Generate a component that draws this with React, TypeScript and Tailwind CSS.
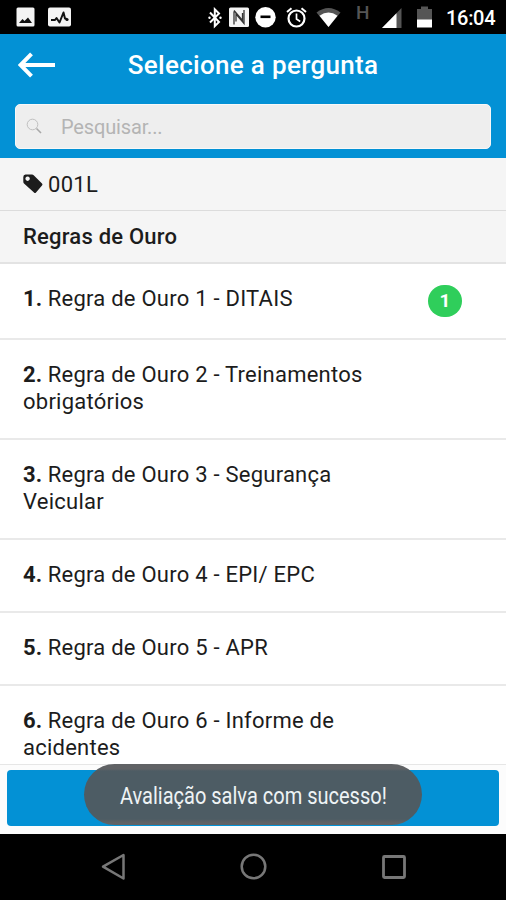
import type { ReactNode } from "react";

const questions = [
  { id: 1, text: "Regra de Ouro 1 - DITAIS", height: "h-[76px]", answered: 1 },
  { id: 2, text: "Regra de Ouro 2 - Treinamentos obrigatórios", height: "h-[100px]" },
  { id: 3, text: "Regra de Ouro 3 - Segurança Veicular", height: "h-[100px]" },
  { id: 4, text: "Regra de Ouro 4 - EPI/ EPC", height: "h-[73px]" },
  { id: 5, text: "Regra de Ouro 5 - APR", height: "h-[73px]" },
  { id: 6, text: "Regra de Ouro 6 - Informe de acidentes", height: "h-[100px]" },
];

function Icon({ w, h, className = "", children }: { w: number; h: number; className?: string; children: ReactNode }) {
  return (
    <svg width={w} height={h} viewBox={`0 0 ${w} ${h}`} fill="none" className={`shrink-0 ${className}`}>
      {children}
    </svg>
  );
}

function StatusBar() {
  return (
    <div className="flex h-[34px] shrink-0 items-start bg-black text-white">
      <Icon w={19} h={20} className="mt-[7px] ml-4">
        <rect x="0.5" y="0.5" width="18" height="19" rx="1.5" fill="#f4f4f4" />
        <path d="M3 16l3.500-4 2 2L12 10.500l4 5.500z" fill="#111" />
      </Icon>
      <Icon w={23} h={20} className="mt-[7px] ml-[13px]">
        <rect x="0" y="0.5" width="23" height="19" rx="2" fill="#f4f4f4" />
        <path d="M3 13h4l1.500-2 3 4.500L15.500 5.500l1.500 6 2 0.500" stroke="#111" strokeWidth="2" strokeLinejoin="round" />
        <circle cx="19" cy="12.500" r="1.600" fill="#111" />
      </Icon>
      <Icon w={14} h={22} className="mt-[7px] ml-[137px]">
        <path d="M2 5.500l9 9.500-4.200 4.200V2.300L11 6.500 2 15.500" stroke="#fff" strokeWidth="2" />
        <circle cx="1.500" cy="10.700" r="1.200" fill="#fff" />
        <circle cx="12.500" cy="10.700" r="1.200" fill="#fff" />
      </Icon>
      <Icon w={20} h={20} className="mt-[7px] ml-[7px]">
        <rect y="0.500" width="20" height="19.500" rx="1.500" fill="#f4f4f4" />
        <path d="M5 17.500V4.500M5 3.500l8.500 10V6M15 3v13.500l-8-9.500v7.500" stroke="#333" strokeWidth="1.300" />
      </Icon>
      <Icon w={21} h={21} className="mt-[7px] ml-[6px]">
        <circle cx="10.500" cy="10.300" r="10.200" fill="#fff" />
        <path d="M5.500 9.800h10" stroke="#000" strokeWidth="2.600" />
      </Icon>
      <Icon w={21} h={21} className="mt-[7px] ml-[10px]">
        <circle cx="10.500" cy="11.500" r="8" stroke="#fff" strokeWidth="2.200" />
        <path d="M1 5L5.500 1.200M20 5l-4.500-3.800" stroke="#fff" strokeWidth="2" />
        <path d="M10.500 6.500v5.500l3.700 2.500" stroke="#fff" strokeWidth="1.700" />
      </Icon>
      <Icon w={26} h={21} className="mt-[7px] ml-[9px]">
        <path d="M0.500 5.500Q12.500-3.500 24.500 5.500L12.500 20z" fill="#555" />
        <path d="M3.500 8.800Q12.500 2 21.500 8.800L12.500 20z" fill="#fff" />
      </Icon>
      <span className="mt-[3px] ml-[14px] w-[14px] text-[19px] leading-[20px] font-medium text-[#555]">H</span>
      <Icon w={20} h={20} className="mt-[8px] ml-[12px]">
        <path d="M19.500 0v20H0z" fill="#555" />
        <path d="M14.500 5.200V20H0z" fill="#fff" />
      </Icon>
      <Icon w={15} h={22} className="mt-[6px] ml-[15px]">
        <path d="M4 0.500h7V3h4v11H0V3h4z" fill="#555" />
        <path d="M0 13.500h15v8H0z" fill="#fff" />
      </Icon>
      <span className="mt-[6px] ml-[14px] text-[20px] leading-[24px] font-medium tracking-[-0.3px] whitespace-nowrap">
        16:04
      </span>
    </div>
  );
}

function Header() {
  return (
    <header className="h-[124px] shrink-0 bg-[#0391d5]">
      <div className="grid h-[62px] grid-cols-[60px_1fr_60px] items-center">
        <Icon w={38} h={26} className="ml-[18px]">
          <path d="M37 13H3M13.500 1.800L2.500 13l11 11.200" stroke="#fff" strokeWidth="4" />
        </Icon>
        <h1 className="text-center text-[26px] leading-8 font-medium tracking-[0.32px] whitespace-nowrap text-white">
          Selecione a pergunta
        </h1>
      </div>
      <div className="mx-[15px] mt-2 flex h-[45px] items-center rounded-[5px] border border-[#f8f8f8] bg-[#eeeeee]">
        <Icon w={16} h={16} className="mb-[2px] ml-[10px]">
          <circle cx="6.500" cy="6.500" r="5.300" stroke="#c0c0c0" strokeWidth="1" />
          <path d="M10.500 10.500l4.500 4.500" stroke="#a8a8a8" strokeWidth="1.600" />
        </Icon>
        <span className="ml-[19px] text-[20px] tracking-[-0.15px] text-[#b4b4b4]">Pesquisar...</span>
      </div>
    </header>
  );
}

export default function App() {
  return (
    <div className="relative flex h-[900px] w-[506px] flex-col overflow-hidden bg-white font-[Roboto,sans-serif] text-[#1c1c1c]">
      <StatusBar />
      <Header />

      <div className="flex h-[53px] shrink-0 items-center border-b border-[#dcdcdc] bg-[#f5f5f5] pl-[23px] text-[22px] tracking-[0.3px]">
        <Icon w={20} h={20} className="mr-[5px]">
          <path
            d="M2.500 0.500h6.500q1 0 1.700 0.700L19 9.500q1 1 0 2l-6 7q-1 1-2 0L1 9.500Q0.300 8.800 0.300 7.500V3Q0.300 0.500 2.500 0.500zM4.600 2.500a2.200 2.200 0 1 0 0.010 0z"
            fill="#1c1c1c"
            fillRule="evenodd"
          />
        </Icon>
        <span>001L</span>
      </div>
      <div className="flex h-[53px] shrink-0 items-center border-b-2 border-[#e3e3e3] bg-[#f5f5f5] pl-[23px] text-[22px] font-medium tracking-[0.22px]">
        Regras de Ouro
      </div>

      {/* Questions */}
      <ul className="min-h-0 flex-1 overflow-hidden">
        {questions.map((q) => (
          <li
            key={q.id}
            className={`flex items-start justify-between border-b-2 border-[#e9e9e9] pt-[22px] pr-[44px] pl-[23px] ${q.height}`}
          >
            <p className="w-[350px] text-[22px] leading-[26.500px] tracking-[0.24px]">
              <b className="tracking-normal">{q.id}.</b> {q.text}
            </p>
            {q.answered && (
              <span className="-mt-px flex h-8 w-[34px] items-center justify-center rounded-full bg-[#2fce5b] text-[19px] font-bold text-white">
                {q.answered}
              </span>
            )}
          </li>
        ))}
      </ul>

      <footer className="h-[70px] shrink-0 border-t border-[#e6e6e6] bg-[#fcfcfc] px-[7px] pt-[5px]">
        <button className="block h-[56px] w-full rounded-[4px] bg-[#0391d5]" aria-label="Salvar" />
      </footer>

      {/* Android navigation */}
      <nav className="flex h-[66px] shrink-0 items-start justify-between bg-black px-[100px] pt-[19px]">
        <Icon w={26} h={28}>
          <path d="M23.500 2v23.500L3 13.700z" stroke="#777" strokeWidth="2.500" strokeLinejoin="round" />
        </Icon>
        <Icon w={28} h={28}>
          <circle cx="14.500" cy="13.500" r="11.800" stroke="#777" strokeWidth="2.500" />
        </Icon>
        <Icon w={26} h={28}>
          <rect x="3.500" y="3.500" width="21" height="21" rx="1" stroke="#777" strokeWidth="2.800" />
        </Icon>
      </nav>

      {/* Toast */}
      <div className="absolute top-[764px] left-[84px] flex h-[61px] w-[338px] items-center justify-center rounded-full bg-[linear-gradient(#606265_0,#606265_5px,#4d5c64_7px,#4d5c64_55px,#606265_59px)] pt-[5px]">
        <span className="scale-x-[0.87] text-[23px] whitespace-nowrap text-[#eef3f5]">Avaliação salva com sucesso!</span>
      </div>
    </div>
  );
}
